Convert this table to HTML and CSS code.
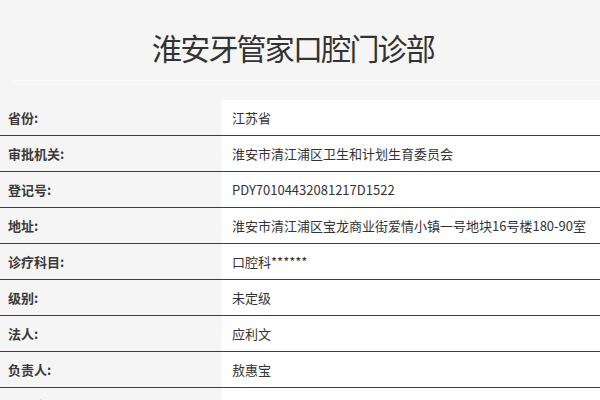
FILE: index.html
```html
<!DOCTYPE html>
<html lang="zh-CN">
<head>
  <meta charset="UTF-8" />
  <title>淮安牙管家口腔门诊部</title>
  <link rel="stylesheet" href="styles.css">
</head>
<body>
  <div class="header">
    <h1>淮安牙管家口腔门诊部</h1>
  </div>

  <table class="info">
    <tr><th>省份:</th><td>江苏省</td></tr>
    <tr><th>审批机关:</th><td>淮安市清江浦区卫生和计划生育委员会</td></tr>
    <tr><th>登记号:</th><td>PDY70104432081217D1522</td></tr>
    <tr><th>地址:</th><td>淮安市清江浦区宝龙商业街爱情小镇一号地块16号楼180-90室</td></tr>
    <tr><th>诊疗科目:</th><td>口腔科******</td></tr>
    <tr><th>级别:</th><td>未定级</td></tr>
    <tr><th>法人:</th><td>应利文</td></tr>
    <tr><th>负责人:</th><td>敖惠宝</td></tr>
    <tr><th>执业许可证有效期:</th><td>2016-12-17至2021-12-16</td></tr>
  </table>
</body>
</html>
```

FILE: styles.css
```css
body {
  margin: 0;
  background: #f5f5f5;
  color: #333;
  font-family: "Noto Sans CJK SC", "Noto Sans", sans-serif;
  font-size: 13px;
}
.header {
  margin-left: 12px;
  height: 81px;
  border-bottom: 1px solid #fbfbfb;
  box-sizing: border-box;
}
h1 {
  margin: 0;
  padding: 25px 0 0 140px;
  font-size: 30px;
  font-weight: normal;
  line-height: 44px;
  color: #333;
  letter-spacing: -1.8px;
}
.info {
  margin-top: 19px;
  width: 100%;
  border-collapse: collapse;
}
.info th, .info td {
  height: 35px;
  padding: 0;
  border-bottom: 1px solid #1f4f3a;
  text-align: left;
  vertical-align: middle;
  line-height: 18px;
}
.info th {
  width: 222px;
  padding-left: 8px;
  box-sizing: border-box;
  font-weight: bold;
  color: #3a3a3a;
}
.info td {
  background: #fff;
  padding-left: 10px;
  color: #333;
}
```
